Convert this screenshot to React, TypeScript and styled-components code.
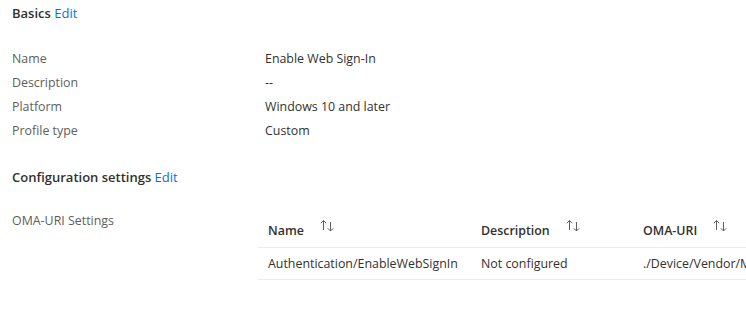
import React from 'react'
import styled, { createGlobalStyle } from 'styled-components'

const GlobalStyle = createGlobalStyle`
    html, body {
        margin: 0;
        padding: 0;
        background: #ffffff;
        overflow: hidden;
    }
    body {
        font-family: 'Open Sans', 'Noto Sans', sans-serif;
        font-size: 12.4px;
        color: #323130;
    }
`

const basics = [
    { label: 'Name', value: 'Enable Web Sign-In' },
    { label: 'Description', value: '--' },
    { label: 'Platform', value: 'Windows 10 and later' },
    { label: 'Profile type', value: 'Custom' },
]

const columns = [
    { title: 'Name', width: 213 },
    { title: 'Description', width: 162 },
    { title: 'OMA-URI', width: 240 },
]

const rows = [
    ['Authentication/EnableWebSignIn', 'Not configured', './Device/Vendor/MSFT/Policy/Config/Authentication/EnableWebSignIn'],
]

const SortIcon: React.FC = () => (
    <svg width="16" height="13" viewBox="0 0 16 13" fill="none" stroke="#605e5c" strokeWidth="1">
        <path d="M4.5 11V1.5M1.8 4.2L4.5 1.5L7.2 4.2" />
        <path d="M11.5 3V12M8.8 9.3L11.5 12L14.2 9.3" />
    </svg>
)

const App: React.FC = () => {
    return (
        <StyledPage>
            <GlobalStyle />
            <StyledHeading>
                Basics <StyledEdit>Edit</StyledEdit>
            </StyledHeading>
            <StyledPropertyList>
                {basics.map((item) => (
                    <React.Fragment key={item.label}>
                        <StyledLabel>{item.label}</StyledLabel>
                        <StyledValue>{item.value}</StyledValue>
                    </React.Fragment>
                ))}
            </StyledPropertyList>
            <StyledHeading marginTop={26}>
                Configuration settings <StyledEdit>Edit</StyledEdit>
            </StyledHeading>
            <StyledSettingsRow>
                <StyledSettingsLabel>OMA-URI Settings</StyledSettingsLabel>
                <StyledTable>
                    <StyledHeaderRow>
                        {columns.map((col) => (
                            <StyledHeaderCell key={col.title} width={col.width}>
                                <span>{col.title}</span>
                                <StyledSortWrap>
                                    <SortIcon />
                                </StyledSortWrap>
                            </StyledHeaderCell>
                        ))}
                    </StyledHeaderRow>
                    {rows.map((row, i) => (
                        <StyledBodyRow key={i}>
                            {row.map((cell, j) => (
                                <StyledCell key={j} width={columns[j].width}>
                                    {cell}
                                </StyledCell>
                            ))}
                        </StyledBodyRow>
                    ))}
                </StyledTable>
            </StyledSettingsRow>
        </StyledPage>
    )
}

const StyledPage = styled.div`
    width: 746px;
    height: 316px;
    padding: 4px 0 0 12px;
    box-sizing: border-box;
    overflow: hidden;
`

interface StyledHeadingProps {
    marginTop?: number
}

const StyledHeading = styled.div<StyledHeadingProps>`
    margin-top: ${(props) => props.marginTop ? props.marginTop : 0}px;
    height: 18px;
    line-height: 18px;
    font-size: 13px;
    font-weight: 600;
    color: #323130;
    white-space: nowrap;
`

const StyledEdit = styled.span`
    font-weight: 400;
    color: #0078d4;
`

const StyledPropertyList = styled.div`
    display: grid;
    grid-template-columns: 253px 1fr;
    grid-auto-rows: 24px;
    margin-top: 24px;
    align-items: center;
`

const StyledLabel = styled.div`
    color: #605e5c;
    white-space: nowrap;
`

const StyledValue = styled.div`
    color: #323130;
    white-space: nowrap;
`

const StyledSettingsRow = styled.div`
    display: flex;
    flex-direction: row;
    margin-top: 26px;
`

const StyledSettingsLabel = styled.div`
    width: 246px;
    flex: none;
    color: #605e5c;
    white-space: nowrap;
    line-height: 18px;
`

const StyledTable = styled.div`
    display: flex;
    flex-direction: column;
`

const StyledHeaderRow = styled.div`
    display: flex;
    flex-direction: row;
    height: 35px;
    border-bottom: 1px solid #edebe9;
`

interface CellProps {
    width: number
}

const StyledHeaderCell = styled.div<CellProps>`
    display: flex;
    flex-direction: row;
    align-items: center;
    gap: 15px;
    width: ${(props) => props.width}px;
    flex: none;
    padding-left: 10px;
    padding-top: 2px;
    box-sizing: border-box;
    font-weight: 600;
    color: #323130;
    white-space: nowrap;
`

const StyledSortWrap = styled.div`
    display: flex;
    margin-top: -10px;
`

const StyledBodyRow = styled.div`
    display: flex;
    flex-direction: row;
    height: 31px;
    align-items: center;
    border-bottom: 1px solid #edebe9;
`

const StyledCell = styled.div<CellProps>`
    width: ${(props) => props.width}px;
    flex: none;
    padding-left: 10px;
    box-sizing: border-box;
    white-space: nowrap;
    overflow: hidden;
    color: #323130;
`

export default App
